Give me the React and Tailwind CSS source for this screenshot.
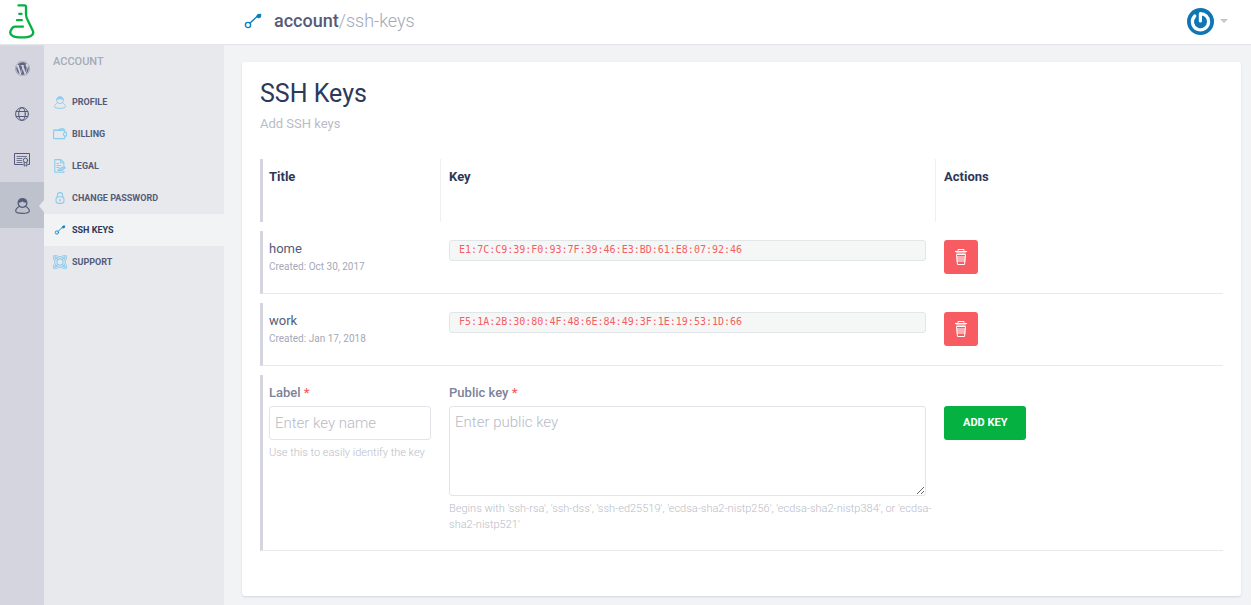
import React from 'react';
import { FaWordpress } from 'react-icons/fa';

const stroke = { fill: 'none', stroke: 'currentColor', strokeLinecap: 'round', strokeLinejoin: 'round' };

function FlaskLogo() {
  return (
    <svg viewBox="0 0 26 35" className="h-[35px] w-[26px]" {...stroke} strokeWidth="2.3" aria-hidden="true">
      <path d="M9.5 1.4H15.5C16.6 1.4 17 1.8 17 2.9V10.5C17 12.4 17.6 13.8 18.4 15.4L23.7 26.4C26.2 31.8 20 33.4 12.7 33.4C5.5 33.4 -0.6 31.8 1.8 26.6L2.6 24.9C3.4 23.2 4.4 22.6 6 22.6H14" />
      <path d="M10.2 9.8H12.6M8 16.2H12.8" />
    </svg>
  );
}

function KeyIcon({ className }) {
  return (
    <svg viewBox="0 0 18 16" className={className} {...stroke} strokeWidth="1.4" aria-hidden="true">
      <circle cx="4" cy="12" r="2.6" />
      <path d="M6.1 10L13.8 2.8" />
      <path d="M12.8 3.6L14 1.6L16.6 1.4L16.4 3.8L14.8 4.6Z" fill="currentColor" />
    </svg>
  );
}

function GlobeIcon() {
  return (
    <svg viewBox="0 0 14 14" className="size-3.5" {...stroke} strokeWidth="1" aria-hidden="true">
      <circle cx="7" cy="7" r="6.4" />
      <ellipse cx="7" cy="7" rx="3.3" ry="6.4" />
      <path d="M1.2 4.5H12.8M1.2 9.5H12.8" />
    </svg>
  );
}

function CertificateIcon() {
  return (
    <svg viewBox="0 0 16 14" className="h-3.5 w-4" {...stroke} strokeWidth="1" aria-hidden="true">
      <path d="M9 11.5H0.5V0.5H15.5V11.5H14" />
      <path d="M3 3.5H12.5M3 5.5H8M3 7.5H7.5M3 9.5H8" strokeOpacity="0.8" />
      <circle cx="11.5" cy="7.3" r="2.2" />
      <path d="M10.2 9.4V13.2L11.5 12.2L12.8 13.2V9.4" />
    </svg>
  );
}

function UserIcon({ className }) {
  return (
    <svg viewBox="0 0 15 16" className={className} {...stroke} strokeWidth="1.2" aria-hidden="true">
      <path d="M4.6 8.2C3 6.8 3 4.6 3.4 3.4C4 1.6 5.8 0.7 7.5 0.7S11 1.6 11.6 3.4C12 4.6 12 6.8 10.4 8.2" />
      <path d="M4.6 8.2C2.2 9.4 0.7 11.2 0.7 13C0.7 14.6 3.4 15.3 7.5 15.3S14.3 14.6 14.3 13C14.3 11.2 12.8 9.4 10.4 8.2C8.6 9.6 6.4 9.6 4.6 8.2Z" />
      <path d="M3.4 4.6C5.4 4.8 6.6 4 7.2 3.2C8.2 4.2 9.8 4.8 11.6 4.6C11 2 9.6 0.8 7.5 0.8S4 2 3.4 4.6Z" fill="currentColor" stroke="none" />
    </svg>
  );
}

function WalletIcon({ className }) {
  return (
    <svg viewBox="0 0 14 12" className={className} {...stroke} strokeWidth="1.1" aria-hidden="true">
      <path d="M11.8 4V2.6C11.8 2.2 11.6 2 11.2 2H1.2C0.8 2 0.6 2.3 0.6 2.6V9.9C0.6 10.3 0.8 10.6 1.2 10.6H11.2C11.6 10.6 11.8 10.3 11.8 9.9V8.2" />
      <path d="M1 2.4H11.6" />
      <path d="M6 1.8L7 0.8H10.6L11.2 1.8" />
      <path d="M13.4 4.2H12A2 2 0 0 0 12 8.1H13.4Z" />
    </svg>
  );
}

function LegalIcon({ className }) {
  return (
    <svg viewBox="0 0 12 14" className={className} {...stroke} strokeWidth="1.1" aria-hidden="true">
      <path d="M9.8 6V3.4L7 0.6H0.8V13.3H9.8V12.4" />
      <path d="M6.6 0.8V3.8H9.6M2.8 4.5H4.6M2.8 6.5H7M2.8 8.5H5" />
      <path d="M3.6 11.4L6 9.4L10 7.4L11.2 8.8L7.6 11.6Z" fill="currentColor" fillOpacity="0.6" />
    </svg>
  );
}

function LockIcon({ className }) {
  return (
    <svg viewBox="0 0 10 12" className={className} {...stroke} strokeWidth="1.1" aria-hidden="true">
      <path d="M2.4 5V3.2A2.6 2.6 0 0 1 7.6 3.2V5" />
      <rect x="1" y="4.8" width="8" height="6.6" rx="2.6" />
      <path d="M5 7.4V8.8" strokeWidth="1.5" />
    </svg>
  );
}

function SupportIcon({ className }) {
  return (
    <svg viewBox="0 0 14 14" className={className} {...stroke} strokeWidth="1.1" aria-hidden="true">
      <circle cx="7" cy="7" r="5.4" />
      <circle cx="7" cy="7" r="3.1" />
      <path d="M0.7 4.2V0.7H4.2M9.8 0.7H13.3V4.2M13.3 9.8V13.3H9.8M4.2 13.3H0.7V9.8" />
      <path d="M2 2L4.7 4.7M12 2L9.3 4.7M12 12L9.3 9.3M2 12L4.7 9.3" />
    </svg>
  );
}

function TrashIcon() {
  return (
    <svg viewBox="0 0 12 16" className="h-4 w-3" fill="none" stroke="currentColor" aria-hidden="true">
      <path d="M3 2V0.5H9V2" />
      <path d="M1 3.5H11M1.5 4.5H10.5" strokeOpacity="0.5" />
      <path d="M0 2.5H12" />
      <path d="M1.5 5.5H10.5L9.5 15.5H2.5Z" />
      <path d="M1.5 7H10.5V13H1.5Z" fill="currentColor" fillOpacity="0.5" stroke="none" />
    </svg>
  );
}

function Avatar() {
  return (
    <svg viewBox="0 0 27 27" className="size-[27px]" aria-hidden="true">
      <circle cx="13.5" cy="13.5" r="13.5" fill="#0e76b4" />
      <g fill="none" stroke="#fff" strokeWidth="3.2" strokeLinecap="round" strokeLinejoin="round">
        <path d="M13.4 13V5.6C18 5.6 21.6 9.2 21.6 13.6A8.1 8.1 0 1 1 7.8 8" />
      </g>
    </svg>
  );
}

const sections = [
  { name: 'Sites', icon: <FaWordpress className="size-[15px] opacity-90" aria-hidden="true" /> },
  { name: 'Domains', icon: <GlobeIcon /> },
  { name: 'Certificates', icon: <CertificateIcon /> },
  { name: 'Account', icon: <UserIcon className="h-4 w-[15px]" />, active: true },
];

const menu = [
  { name: 'Profile', icon: <UserIcon className="h-[13px] w-3" /> },
  { name: 'Billing', icon: <WalletIcon className="h-3 w-3.5" /> },
  { name: 'Legal', icon: <LegalIcon className="h-3.5 w-3" /> },
  { name: 'Change password', icon: <LockIcon className="h-3 w-2.5" /> },
  { name: 'SSH keys', icon: <KeyIcon className="h-2.5 w-3" />, active: true },
  { name: 'Support', icon: <SupportIcon className="size-3.5" /> },
];

const keys = [
  { title: 'home', created: 'Oct 30, 2017', print: 'E1:7C:C9:39:F0:93:7F:39:46:E3:BD:61:E8:07:92:46' },
  { title: 'work', created: 'Jan 17, 2018', print: 'F5:1A:2B:30:80:4F:48:6E:84:49:3F:1E:19:53:1D:66' },
];

const firstCell = 'border-l-3 border-l-[#d4d5de] border-b border-b-[#e8e9ed] py-[9px] pr-[9px] pl-1.5 align-top';
const cell = 'border-b border-b-[#e8e9ed] px-[9px] py-[9px] align-top';
const headCell = 'h-[63px] border-l border-l-[#eeeff2] py-[9px] pr-[9px] pl-2 text-left align-top font-bold text-[#2e3859]';
const field = 'block w-full rounded-[3px] border border-[#e3e4e9] bg-white px-[5px] text-[15px] font-light text-[#545b78] placeholder:text-[#b7bac6]';
const help = '-mr-[9px] mt-[5px] text-[11px] leading-4 font-light text-[#b9bcc8]';

export default function App() {
  return (
    <div className="flex min-h-screen flex-col bg-[#f2f3f5] font-['Roboto',sans-serif] text-[13px] leading-[18px] text-[#545b78]">
      <header className="relative flex h-11 items-center bg-white pr-[23px] pb-0.5 shadow-[0_1px_1px_#e4e6ea]">
        <a href="#home" aria-label="Home" className="flex w-11 justify-center text-[#05b140]">
          <FlaskLogo />
        </a>
        <div className="ml-[200px] flex flex-1 items-center gap-3">
          <KeyIcon className="h-4 w-[18px] text-[#0e7fbf]" />
          <div className="text-[18px] leading-6">
            <span className="font-medium">account</span>
            <span className="font-light text-[#a5a9b8]">/ssh-keys</span>
          </div>
        </div>
        <button type="button" aria-label="User menu" className="flex items-center gap-1.5 text-[#c3c6d1]">
          <Avatar />
          <svg viewBox="0 0 8 4" className="h-1 w-2" aria-hidden="true">
            <path d="M0 0H8L4 4Z" fill="currentColor" />
          </svg>
        </button>
      </header>

      <div className="flex flex-1">
        <nav aria-label="Sections" className="w-11 shrink-0 bg-[#d4d5de]">
          {sections.map((s) => (
            <a
              key={s.name}
              href={`#${s.name}`}
              aria-label={s.name}
              className={`relative flex h-[46px] items-center justify-center pt-0.5 ${s.active ? 'bg-[#bec2cd]' : ''}`}
            >
              {s.icon}
              {s.active && (
                <svg viewBox="0 0 5 12" className="absolute right-0 h-3 w-[5px]" aria-hidden="true">
                  <path d="M5 0V12L0 6Z" fill="#e8e9ed" />
                </svg>
              )}
            </a>
          ))}
        </nav>

        <nav aria-label="Account" className="w-[180px] shrink-0 bg-[#e8e9ed] pt-[9px]">
          <h2 className="px-[9px] text-[11px] font-medium text-[#a5a9b8] uppercase">Account</h2>
          <ul className="mt-[15px]">
            {menu.map((m) => (
              <li key={m.name}>
                <a
                  href={`#${m.name}`}
                  className={`flex h-8 items-center gap-[5px] px-[9px] text-[9px] font-bold uppercase ${m.active ? 'bg-[#f2f3f5] text-[#2e3859]' : ''}`}
                >
                  <span className={`flex w-3.5 justify-center ${m.active ? 'text-[#0e7fbf]' : 'text-[#8dcbec]'}`}>{m.icon}</span>
                  {m.name}
                </a>
              </li>
            ))}
          </ul>
        </nav>

        <main className="min-w-0 flex-1 pt-[18px] pr-2.5 pb-[9px] pl-[18px]">
          <section className="min-h-full rounded-[3px] bg-white px-[18px] pt-[18px] pb-9 shadow-[0_1px_2px_#d4d5de]">
            <h1 className="text-[25px] leading-7 text-[#2e3859]">SSH Keys</h1>
            <p className="mt-[7px] text-[#b9bcc8]">Add SSH keys</p>

            <form className="mt-[17px]" onSubmit={(e) => e.preventDefault()}>
              <table className="w-full table-fixed border-separate border-spacing-x-0 border-spacing-y-[9px]">
                <thead>
                  <tr>
                    <th scope="col" className="h-[63px] w-[18.7%] border-l-3 border-l-[#d4d5de] py-[9px] pl-1.5 text-left align-top font-bold text-[#2e3859]">
                      Title
                    </th>
                    <th scope="col" className={`w-[51.4%] ${headCell}`}>Key</th>
                    <th scope="col" className={headCell}>Actions</th>
                  </tr>
                </thead>
                <tbody>
                  {keys.map((k) => (
                    <tr key={k.title} className="h-[63px]">
                      <td className={firstCell}>
                        <div>{k.title}</div>
                        <div className="text-[10px] text-[#a5a9b8]">Created: {k.created}</div>
                      </td>
                      <td className={cell}>
                        <code className="block rounded-[3px] border border-[#e3e6e8] bg-[#f5f7f7] px-[9px] pb-0.5 font-['DejaVu_Sans_Mono',monospace] text-[10px] leading-[17px] text-[#f75c62]">
                          {k.print}
                        </code>
                      </td>
                      <td className={cell}>
                        <button type="button" aria-label={`Delete ${k.title}`} className="flex size-[34px] items-center justify-center rounded-[3px] bg-[#f75c62] text-white">
                          <TrashIcon />
                        </button>
                      </td>
                    </tr>
                  ))}
                  <tr>
                    <td className={firstCell}>
                      <label htmlFor="key-name" className="block font-medium text-[#7c8299]">
                        Label <span className="text-[#f75c62]">*</span>
                      </label>
                      <input id="key-name" type="text" placeholder="Enter key name" className={`mt-1 h-[34px] ${field}`} />
                      <p className={help}>Use this to easily identify the key</p>
                    </td>
                    <td className="border-b border-b-[#e8e9ed] px-[9px] pt-[9px] pb-[17px] align-top">
                      <label htmlFor="public-key" className="block font-medium text-[#7c8299]">
                        Public key <span className="text-[#f75c62]">*</span>
                      </label>
                      <textarea id="public-key" placeholder="Enter public key" className={`mt-1 h-[90px] resize py-1.5 ${field}`} />
                      <p className={help}>
                        Begins with 'ssh-rsa', 'ssh-dss', 'ssh-ed25519', 'ecdsa-sha2-nistp256', 'ecdsa-sha2-nistp384', or 'ecdsa-sha2-nistp521'
                      </p>
                    </td>
                    <td className="border-b border-b-[#e8e9ed] px-[9px] pt-[31px] align-top">
                      <button type="submit" className="h-[34px] rounded-[3px] bg-[#05b140] px-[19px] text-[11px] font-bold text-white uppercase">
                        Add key
                      </button>
                    </td>
                  </tr>
                </tbody>
              </table>
            </form>
          </section>
        </main>
      </div>
    </div>
  );
}
